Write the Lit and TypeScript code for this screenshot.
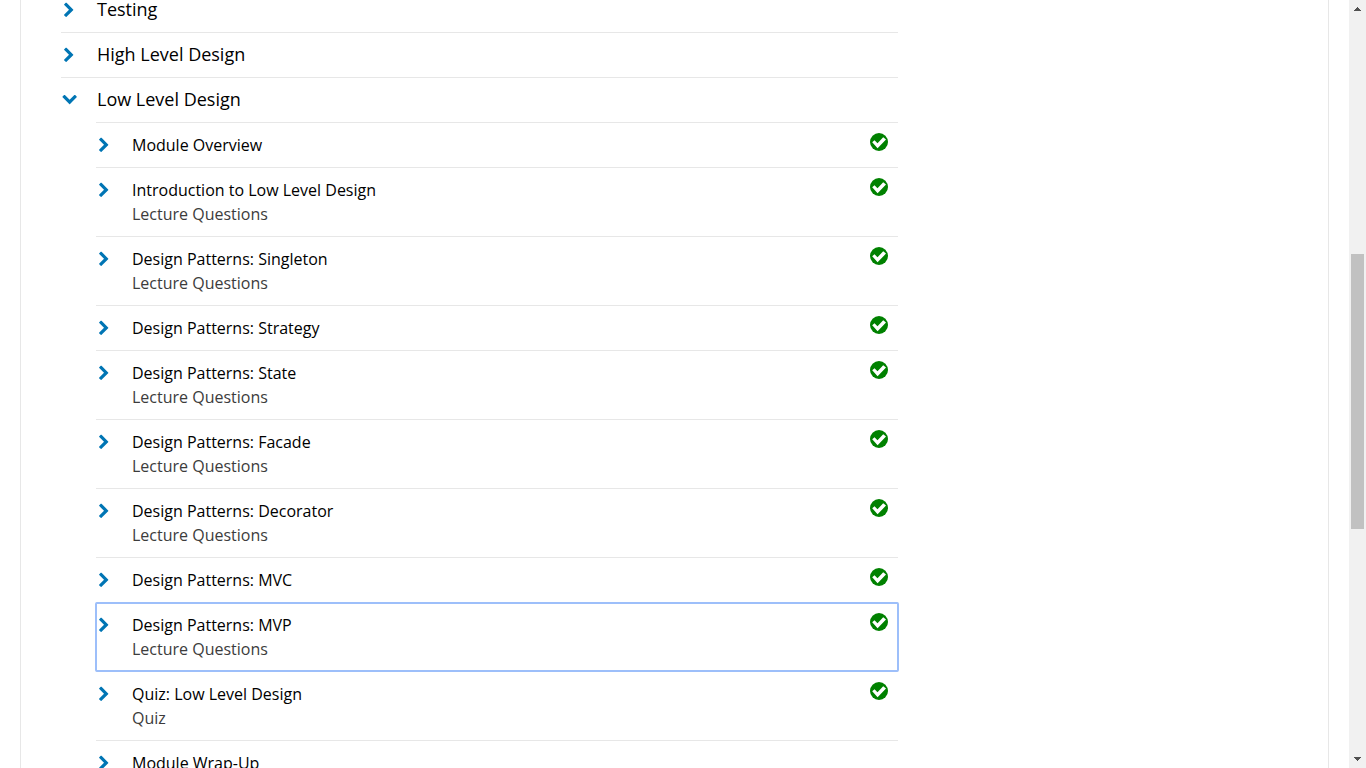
import { LitElement, html, css, svg, nothing } from "lit";
import { customElement, property, state } from "lit/decorators.js";
import { classMap } from "lit/directives/class-map.js";

interface Lesson {
  title: string;
  kind?: string;
  done: boolean;
}

interface CourseModule {
  title: string;
  lessons?: Lesson[];
}

const MODULES: CourseModule[] = [
  { title: "Testing" },
  { title: "High Level Design" },
  {
    title: "Low Level Design",
    lessons: [
      { title: "Module Overview", done: true },
      { title: "Introduction to Low Level Design", kind: "Lecture Questions", done: true },
      { title: "Design Patterns: Singleton", kind: "Lecture Questions", done: true },
      { title: "Design Patterns: Strategy", done: true },
      { title: "Design Patterns: State", kind: "Lecture Questions", done: true },
      { title: "Design Patterns: Facade", kind: "Lecture Questions", done: true },
      { title: "Design Patterns: Decorator", kind: "Lecture Questions", done: true },
      { title: "Design Patterns: MVC", done: true },
      { title: "Design Patterns: MVP", kind: "Lecture Questions", done: true },
      { title: "Quiz: Low Level Design", kind: "Quiz", done: true },
      { title: "Module Wrap-Up", done: false },
    ],
  },
];

const chevronRight = svg`<path d="M1363 877l-742 742q-19 19-45 19t-45-19l-166-166q-19-19-19-45t19-45l531-531-531-531q-19-19-19-45t19-45l166-166q19-19 45-19t45 19l742 742q19 19 19 45t-19 45z" transform="translate(0 45)"/>`;
const chevronDown = svg`<path d="M1683 808l-742 741q-19 19-45 19t-45-19l-742-741q-19-19-19-45.5t19-45.5l166-165q19-19 45-19t45 19l531 531 531-531q19-19 45-19t45 19l166 165q19 19 19 45.5t-19 45.5z" transform="translate(70 -210)"/>`;

@customElement("outline-row")
export class OutlineRow extends LitElement {
  @property() label = "";
  @property() kind = "";
  @property({ type: Boolean }) open = false;
  @property({ type: Boolean }) done = false;
  @property({ type: Boolean }) large = false;
  @property({ type: Boolean }) selected = false;

  static styles = css`
    :host {
      display: block;
      border-top: 1px solid #e7e7e7;
    }
    .row {
      display: flex;
      align-items: flex-start;
      width: 100%;
      margin: 0;
      padding: 10px 10px 10px 0;
      border: 0;
      background: none;
      color: #000;
      font: 400 16px/24px "Open Sans", sans-serif;
      text-align: left;
      cursor: pointer;
    }
    .row:focus {
      outline: none;
    }
    .row.selected,
    .row:focus-visible {
      outline: 2px solid #9dbffa;
      outline-offset: -1px;
      border-radius: 1px;
    }
    .chevron {
      flex: none;
      width: 16px;
      height: 16px;
      margin: 4px 20px 4px 0;
      overflow: visible;
      fill: #0075b4;
    }
    .text {
      flex: 1;
      min-width: 0;
    }
    .title,
    .kind {
      display: block;
    }
    .large .title {
      padding-bottom: 2px;
      font-size: 18px;
      line-height: 22px;
    }
    .kind {
      color: #3c3c3c;
    }
    .check {
      flex: none;
      width: 18px;
      height: 18px;
    }
  `;

  render() {
    return html`
      <button
        class=${classMap({ row: true, large: this.large, selected: this.selected })}
        aria-expanded=${this.open ? "true" : "false"}
      >
        <svg class="chevron" viewBox="0 0 1792 1792" aria-hidden="true">
          ${this.open ? chevronDown : chevronRight}
        </svg>
        <span class="text">
          <span class="title">${this.label}</span>
          ${this.kind ? html`<span class="kind">${this.kind}</span>` : nothing}
        </span>
        ${this.done
          ? html`<svg class="check" viewBox="0 0 18 18" role="img" aria-label="Completed">
              <circle cx="9" cy="9" r="9" fill="#008100" />
              <path d="M2.2 9.2 4.5 7.2 7.5 10.2 13.2 4.3 16 6.6 7.6 15.2z" fill="#fff" />
            </svg>`
          : nothing}
      </button>
    `;
  }
}

@customElement("app-root")
export class AppRoot extends LitElement {
  @state() private openModule = "Low Level Design";
  @state() private current = "Design Patterns: MVP";

  static styles = css`
    :host {
      display: flex;
      height: 100vh;
      overflow: hidden;
      background: #fff;
    }
    .view {
      flex: 1;
      min-width: 0;
      padding: 0 20px;
      overflow: hidden;
    }
    .content {
      box-sizing: border-box;
      display: grid;
      grid-template-columns: minmax(0, 837fr) minmax(0, 390fr);
      min-height: 100%;
      padding: 0 40px;
      border: solid #e7e7e7;
      border-width: 0 1px;
    }
    .outline,
    .lessons {
      margin: 0;
      padding: 0;
      list-style: none;
    }
    .outline {
      margin-top: -13px;
    }
    .lessons {
      padding-left: 35px;
    }
    .scrollbar {
      flex: none;
      display: flex;
      flex-direction: column;
      width: 17px;
      background: #f1f1f1;
    }
    .arrow {
      flex: none;
      width: 17px;
      height: 17px;
      fill: #505050;
    }
    .before {
      flex: 237;
    }
    .thumb {
      flex: 275;
      margin: 0 2px;
      background: #c1c1c1;
    }
    .after {
      flex: 222;
    }
  `;

  private toggle(title: string) {
    this.openModule = this.openModule === title ? "" : title;
  }

  private renderModule(m: CourseModule) {
    const open = this.openModule === m.title;
    return html`
      <li>
        <outline-row large .label=${m.title} ?open=${open} @click=${() => this.toggle(m.title)}></outline-row>
        ${open && m.lessons
          ? html`<ol class="lessons">
              ${m.lessons.map(
                (l) => html`<li>
                  <outline-row
                    .label=${l.title}
                    .kind=${l.kind ?? ""}
                    ?done=${l.done}
                    ?selected=${this.current === l.title}
                    @click=${() => (this.current = l.title)}
                  ></outline-row>
                </li>`
              )}
            </ol>`
          : nothing}
      </li>
    `;
  }

  render() {
    return html`
      <main class="view">
        <div class="content">
          <ol class="outline">
            ${MODULES.map((m) => this.renderModule(m))}
          </ol>
        </div>
      </main>
      <div class="scrollbar" aria-hidden="true">
        <svg class="arrow" viewBox="0 0 17 17" shape-rendering="crispEdges">
          <path d="M8 7h1v1h1v1h1v1h1v1H5v-1h1v-1h1v-1h1z" />
        </svg>
        <div class="before"></div>
        <div class="thumb"></div>
        <div class="after"></div>
        <svg class="arrow" viewBox="0 0 17 17" shape-rendering="crispEdges">
          <path d="M5 6h7v1h-1v1h-1v1H9v1H8V9H7V8H6V7H5z" />
        </svg>
      </div>
    `;
  }
}
